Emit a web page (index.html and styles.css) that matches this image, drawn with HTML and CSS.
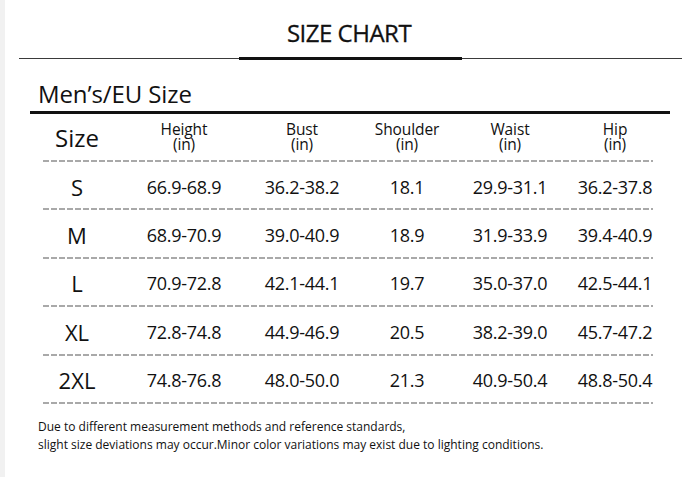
FILE: index.html
```html
<!DOCTYPE html>
<html>
<head>
<meta charset="utf-8">
<link rel="stylesheet" href="styles.css">
</head>
<body>
<div class="page">
  <h1 class="title">SIZE CHART</h1>
  <div class="rule"><div class="rule-thick"></div></div>
  <div class="section-head"><span class="section-title">Men’s/EU Size</span></div>
  <div class="table">
    <div class="row head-row">
      <div class="cell size-head">Size</div>
      <div class="cell th"><span>Height</span><span>(in)</span></div>
      <div class="cell th"><span>Bust</span><span>(in)</span></div>
      <div class="cell th"><span>Shoulder</span><span>(in)</span></div>
      <div class="cell th"><span>Waist</span><span>(in)</span></div>
      <div class="cell th"><span>Hip</span><span>(in)</span></div>
    </div>
    <div class="row data-row">
      <div class="cell label">S</div>
      <div class="cell val">66.9-68.9</div>
      <div class="cell val">36.2-38.2</div>
      <div class="cell val">18.1</div>
      <div class="cell val">29.9-31.1</div>
      <div class="cell val">36.2-37.8</div>
    </div>
    <div class="row data-row">
      <div class="cell label">M</div>
      <div class="cell val">68.9-70.9</div>
      <div class="cell val">39.0-40.9</div>
      <div class="cell val">18.9</div>
      <div class="cell val">31.9-33.9</div>
      <div class="cell val">39.4-40.9</div>
    </div>
    <div class="row data-row">
      <div class="cell label">L</div>
      <div class="cell val">70.9-72.8</div>
      <div class="cell val">42.1-44.1</div>
      <div class="cell val">19.7</div>
      <div class="cell val">35.0-37.0</div>
      <div class="cell val">42.5-44.1</div>
    </div>
    <div class="row data-row">
      <div class="cell label">XL</div>
      <div class="cell val">72.8-74.8</div>
      <div class="cell val">44.9-46.9</div>
      <div class="cell val">20.5</div>
      <div class="cell val">38.2-39.0</div>
      <div class="cell val">45.7-47.2</div>
    </div>
    <div class="row data-row">
      <div class="cell label">2XL</div>
      <div class="cell val">74.8-76.8</div>
      <div class="cell val">48.0-50.0</div>
      <div class="cell val">21.3</div>
      <div class="cell val">40.9-50.4</div>
      <div class="cell val">48.8-50.4</div>
    </div>
  </div>
  <div class="note">
    <p>Due to different measurement methods and reference standards,</p>
    <p>slight size deviations may occur.Minor color variations may exist due to lighting conditions.</p>
  </div>
</div>
</body>
</html>
```

FILE: styles.css
```css
html, body {
  margin: 0;
  padding: 0;
  background: #ffffff;
}
body {
  font-family: "Open Sans", "Liberation Sans", sans-serif;
  color: #111111;
}
.page {
  width: 688px;
  height: 477px;
  border-left: 5px solid #f1f1f1;
  display: flex;
  flex-direction: column;
  overflow: hidden;
}
.title {
  margin: 21px 0 0 0;
  font-size: 24px;
  line-height: 24px;
  font-weight: 400;
  text-align: center;
  letter-spacing: -0.5px;
  height: 24px;
  -webkit-text-stroke: 0.3px #111111;
}
.rule {
  margin: 13px 11px 0 14px;
  height: 1px;
  background: #3a3a3a;
  display: flex;
  justify-content: center;
}
.rule-thick {
  width: 223px;
  height: 3px;
  margin-top: -1px;
  background: #111111;
}
.section-head {
  margin: 23px 23px 0 25px;
  padding-left: 8px;
  border-bottom: 3px solid #111111;
  height: 29px;
}
.section-title {
  font-size: 24px;
  line-height: 24px;
  display: block;
  letter-spacing: -0.1px;
}
.table {
  margin-left: 38px;
  width: 610px;
  display: flex;
  flex-direction: column;
}
.row {
  display: grid;
  grid-template-columns: 68px 146px 90px 120px 86px 124px;
  align-items: center;
  background: repeating-linear-gradient(90deg, #a9a9a9 0 6px, transparent 6px 8px) left bottom / 100% 2px no-repeat;
  box-sizing: border-box;
}
.head-row {
  height: 48px;
  padding-bottom: 3px;
}
.data-row {
  height: 48.4px;
  padding-top: 3px;
  padding-bottom: 2px;
}
.cell {
  text-align: center;
  white-space: nowrap;
}
.size-head {
  font-size: 24px;
  line-height: 24px;
  padding-top: 3px;
}
.th {
  display: flex;
  flex-direction: column;
  align-items: center;
  font-size: 15.5px;
  line-height: 15px;
  letter-spacing: -0.1px;
}
.label {
  font-size: 22px;
  line-height: 26px;
}
.val {
  font-size: 18px;
  line-height: 24px;
  letter-spacing: -0.3px;
}
.note {
  margin: 14px 0 0 33px;
  font-size: 12px;
  line-height: 18px;
  letter-spacing: 0;
}
.note p {
  margin: 0;
}
```
